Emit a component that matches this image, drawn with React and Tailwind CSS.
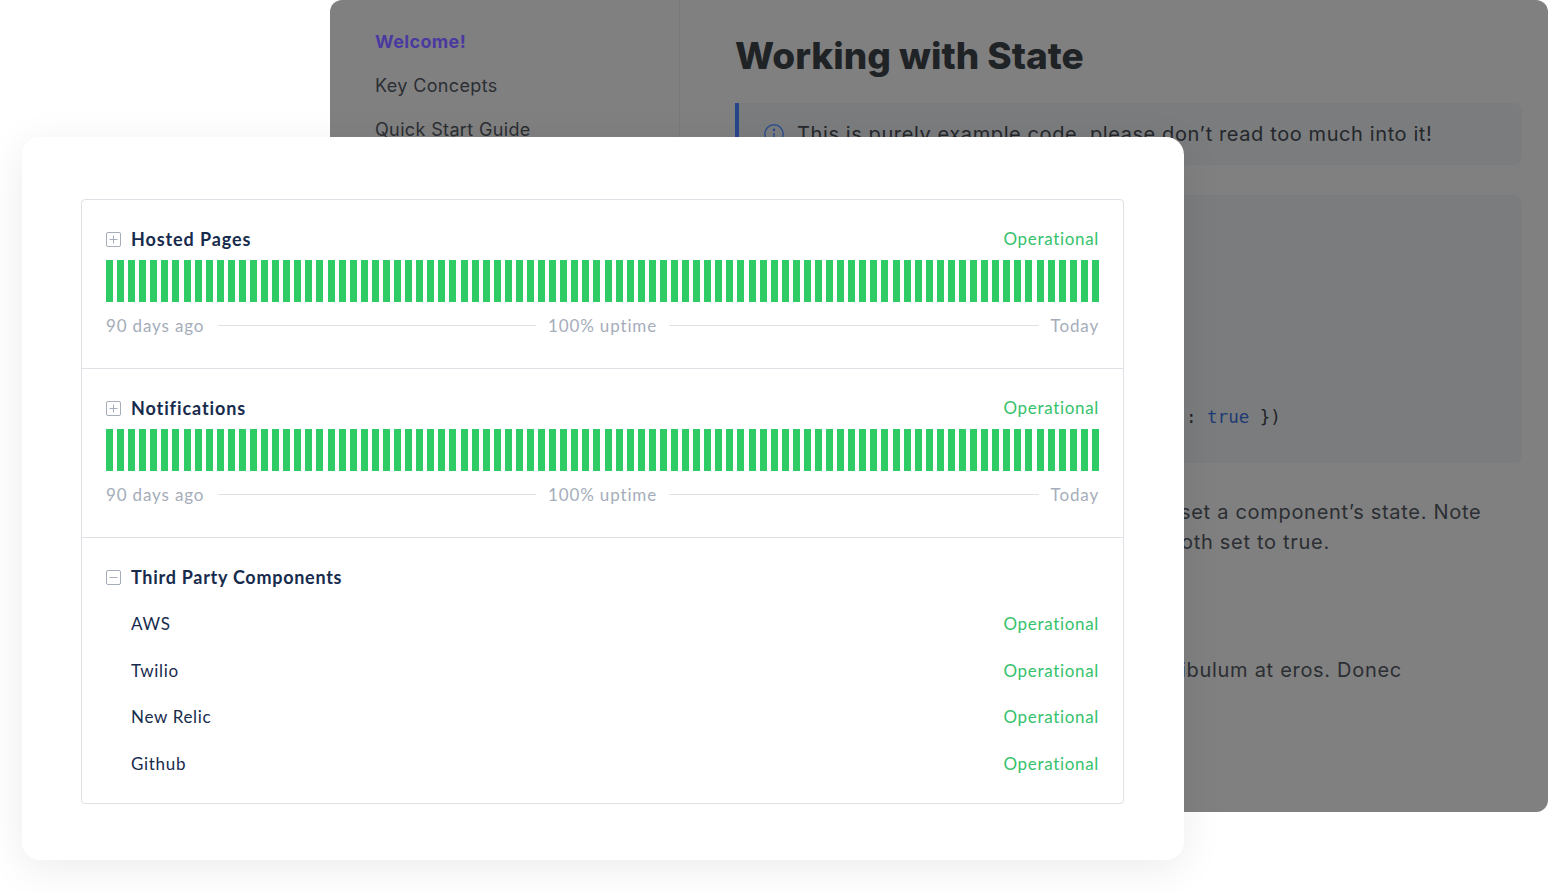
import React from 'react';

const bars = Array.from({ length: 90 }, (_, i) => i);

const PlusSquare = ({ minus }) => (
    <svg width="15" height="15" viewBox="0 0 15 15" fill="none" className="shrink-0">
        <rect x="0.5" y="0.5" width="14" height="14" rx="1.5" stroke="#a5adba" />
        <path d="M3.5 7.5h8" stroke="#a5adba" />
        {!minus && <path d="M7.5 3.5v8" stroke="#a5adba" />}
    </svg>
);

const Uptime = ({ name }) => (
    <div className="px-6 pt-[27px] pb-[35px] border-b border-[#dfe1e6]">
        <div className="flex items-center justify-between h-6">
            <div className="flex items-center gap-[10px]">
                <PlusSquare />
                <span className="text-[18px] font-bold tracking-[0.05em] text-[#172b4d]">{name}</span>
            </div>
            <span className="text-[17px] tracking-[0.04em] text-[#36c26c]">Operational</span>
        </div>
        <div className="mt-[9px] h-[42px] flex justify-between">
            {bars.map((b) => (
                <div key={b} className="w-[7px] h-full bg-[#2fcb65]" />
            ))}
        </div>
        <div className="mt-[11px] h-5 grid grid-cols-[1fr_auto_1fr] items-center text-[17px] tracking-[0.05em] text-[#a5adba]">
            <div className="flex items-center gap-[14px]">
                <span>90 days ago</span>
                <div className="flex-1 h-px bg-[#dfe1e6]" />
            </div>
            <span className="px-[12px]">100% uptime</span>
            <div className="flex items-center gap-[12px]">
                <div className="flex-1 h-px bg-[#dfe1e6]" />
                <span>Today</span>
            </div>
        </div>
    </div>
);

const components = ['AWS', 'Twilio', 'New Relic', 'Github'];

export default function App() {
    return (
        <div className="relative w-full h-[892px] bg-white overflow-hidden">
            {/* Docs page behind, dimmed */}
            <div
                className="absolute left-[330px] top-0 w-[1218px] h-[812px] rounded-xl bg-[#808080] flex overflow-hidden"
                style={{ fontFamily: 'Inter, "Open Sans", sans-serif' }}
            >
                <div className="w-[350px] shrink-0 border-r border-[#7a7a7a] pl-[45px] pt-[30px] flex flex-col gap-[20px] text-[18px] tracking-[0.02em] text-[#2b2e33]">
                    <span className="font-bold text-[#4a3aa0] h-6 leading-6">Welcome!</span>
                    <span className="h-6 leading-6">Key Concepts</span>
                    <span className="h-6 leading-6">Quick Start Guide</span>
                    <span className="h-6 leading-6">Components</span>
                </div>
                <div className="flex-1 pl-[55px] pr-[26px] pt-[34px]">
                    <h1 className="text-[37px] leading-[44px] font-extrabold text-[#202326]">Working with State</h1>
                    <div className="mt-[25px] h-[62px] rounded-r-lg bg-[#7b7c7e] border-l-4 border-[#27468a] flex items-center pl-[24px] gap-[12px] text-[20px] tracking-[0.03em] text-[#24272b]">
                        <svg width="22" height="22" viewBox="0 0 24 24" fill="none" stroke="#2b4d8f" strokeWidth="1.6">
                            <circle cx="12" cy="12" r="10" />
                            <path d="M12 11v6" />
                            <circle cx="12" cy="7.5" r="0.6" fill="#2b4d8f" />
                        </svg>
                        <span>This is purely example code, please don’t read too much into it!</span>
                    </div>
                    <div className="mt-[30px] h-[268px] rounded-lg bg-[#7b7c7e] pl-6 pt-[68px] text-[17.5px] leading-[28px] text-[#202326]" style={{ fontFamily: '"DejaVu Sans Mono", monospace' }}>
                        <div>class Example extends Component {'{'}</div>
                        <div className="pl-8">handleClick() {'{'}</div>
                        <div className="pl-16">// toggle both flags</div>
                        <div className="pl-16">this.setState()</div>
                        <div className="pl-8">{'}'}</div>
                        <div className="flex whitespace-nowrap">
                            <span className="w-[427px] shrink-0 overflow-hidden">this.setState({'{'} isLoading: false, isOpen</span>
                            <span>: <span className="text-[#1d3b73]">true</span> {'})'}</span>
                        </div>
                    </div>
                    <div className="mt-[34px] text-[20px] leading-[30px] tracking-[0.035em] text-[#2b2e33]">
                        <div className="flex whitespace-nowrap">
                            <span className="w-[445px] shrink-0 overflow-hidden">Use the setState method to update and </span>
                            <span>set a component’s state. Note</span>
                        </div>
                        <div className="flex whitespace-nowrap">
                            <span className="w-[446px] shrink-0 overflow-hidden">that isLoading and isOpen are now b</span>
                            <span>oth set to true.</span>
                        </div>
                    </div>
                    <div className="mt-[98px] text-[20px] leading-[30px] tracking-[0.035em] text-[#2b2e33]">
                        <div className="flex whitespace-nowrap">
                            <span className="w-[446px] shrink-0 overflow-hidden">Lorem ipsum dolor sit amet, vest</span>
                            <span>ibulum at eros. Donec</span>
                        </div>
                    </div>
                </div>
            </div>

            {/* Status card */}
            <div
                className="absolute left-[22px] top-[137px] w-[1162px] h-[723px] bg-white rounded-[18px] shadow-[0_8px_40px_rgba(0,0,0,0.08)] pl-[59px] pr-[60px] pt-[62px]"
                style={{ fontFamily: 'Lato, "Open Sans", sans-serif' }}
            >
                <div className="border border-[#dfe1e6] rounded-[4px] overflow-hidden">
                    <Uptime name="Hosted Pages" />
                    <Uptime name="Notifications" />
                    <div className="px-6 pt-[27px] pb-[27px]">
                        <div className="flex items-center gap-[10px] h-6">
                            <PlusSquare minus />
                            <span className="text-[18px] font-bold tracking-[0.04em] text-[#172b4d]">Third Party Components</span>
                        </div>
                        <div className="mt-[23px] flex flex-col gap-[22.6px]">
                            {components.map((c) => (
                                <div key={c} className="flex items-center justify-between h-6 pl-[25px]">
                                    <span className="text-[17px] tracking-[0.04em] text-[#172b4d]">{c}</span>
                                    <span className="text-[17px] tracking-[0.04em] text-[#36c26c]">Operational</span>
                                </div>
                            ))}
                        </div>
                    </div>
                </div>
            </div>
        </div>
    );
}
